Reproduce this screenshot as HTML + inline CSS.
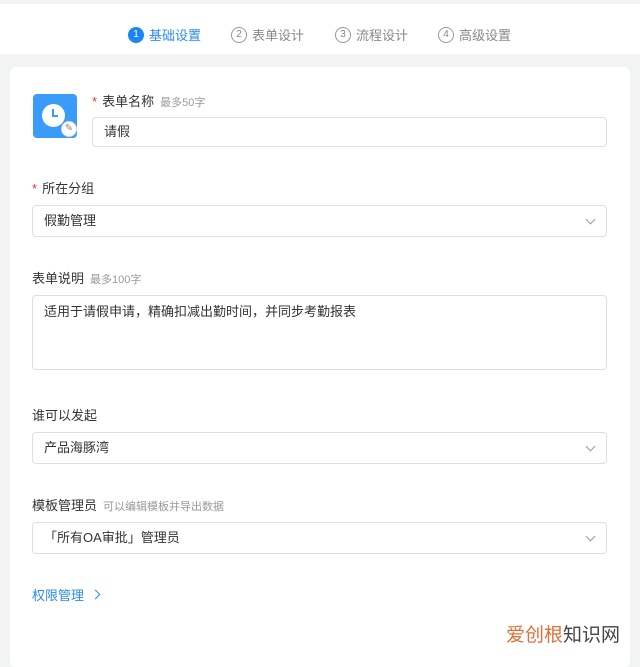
<!DOCTYPE html>
<html><head><meta charset="utf-8"><style>
*{box-sizing:border-box;margin:0;padding:0}
body{width:640px;height:651px;overflow:hidden;background:#f2f3f5;font-family:"Liberation Sans","Noto Sans CJK SC",sans-serif;font-size:13px;color:#333;position:relative}
.hdr{position:absolute;left:0;top:4px;width:640px;height:50px;background:#fff}
.step{position:absolute;top:21px;font-size:13px;color:#888;display:flex;align-items:center}
.step .n{width:16px;height:16px;border-radius:50%;border:1px solid #999;font-size:10px;display:inline-flex;align-items:center;justify-content:center;margin-right:5px;color:#888}
.step.a{color:#2b8bf2}.step.a .n{background:#1a86f5;border-color:#1a86f5;color:#fff}
.card{position:absolute;left:10px;top:67px;width:620px;height:600px;background:#fff;border-radius:6px}
.abs{position:absolute}
.lbl{position:absolute;left:32px;font-size:13px;color:#333}
.lbl small{font-size:11px;color:#999;margin-left:6px}
.star{color:#e33;margin-right:5px}
.box{position:absolute;left:32px;width:575px;border:1px solid #dcdfe4;border-radius:4px;padding-left:11px;font-size:13px;color:#333}
.chev{position:absolute;right:12px;top:10px;width:7px;height:7px;border-right:1px solid #999;border-bottom:1px solid #999;transform:rotate(45deg)}
</style></head><body>
<div class="hdr">
<div class="step a" style="left:128px"><span class="n">1</span>基础设置</div>
<div class="step" style="left:231px"><span class="n">2</span>表单设计</div>
<div class="step" style="left:335px"><span class="n">3</span>流程设计</div>
<div class="step" style="left:438px"><span class="n">4</span>高级设置</div>
</div>
<div class="card"></div>
<div class="abs" style="left:33px;top:94px;width:44px;height:44px;background:#3b9bfb;border-radius:4px">
<div class="abs" style="left:9px;top:10px;width:23px;height:23px;border-radius:50%;background:#fff"></div>
<div class="abs" style="left:19px;top:15px;width:2px;height:8px;background:#3b9bfb"></div>
<div class="abs" style="left:19px;top:21px;width:6px;height:2px;background:#3b9bfb"></div>
<div class="abs" style="left:28px;top:27px;width:16px;height:16px;border-radius:50%;background:#fff;border:1px solid #ddd;color:#888;font-size:10px;text-align:center;line-height:14px">✎</div>
</div>
<div class="lbl" style="left:92px;top:91px"><span class="star">*</span>表单名称<small>最多50字</small></div>
<div class="box" style="left:92px;width:515px;top:117px;height:30px;line-height:28px">请假</div>
<div class="lbl" style="top:178px"><span class="star">*</span>所在分组</div>
<div class="box" style="top:205px;height:32px;line-height:30px">假勤管理<span class="chev"></span></div>
<div class="lbl" style="top:268px">表单说明<small>最多100字</small></div>
<div class="box" style="top:295px;height:75px;padding-top:7px;line-height:18px">适用于请假申请，精确扣减出勤时间，并同步考勤报表</div>
<div class="lbl" style="top:405px">谁可以发起</div>
<div class="box" style="top:432px;height:32px;line-height:30px">产品海豚湾<span class="chev"></span></div>
<div class="lbl" style="top:495px">模板管理员<small>可以编辑模板并导出数据</small></div>
<div class="box" style="top:522px;height:32px;line-height:30px">「所有OA审批」管理员<span class="chev"></span></div>
<div class="lbl" style="top:585px;color:#2b8bf2">权限管理</div>
<div class="abs" style="left:92px;top:591px;width:7px;height:7px;border-right:1.5px solid #2b8bf2;border-top:1.5px solid #2b8bf2;transform:rotate(45deg)"></div>
<div class="abs" style="left:506px;top:620px;font-size:19px;color:#e0703a">爱创根<span style="color:#444">知识网</span></div>
</body></html>
